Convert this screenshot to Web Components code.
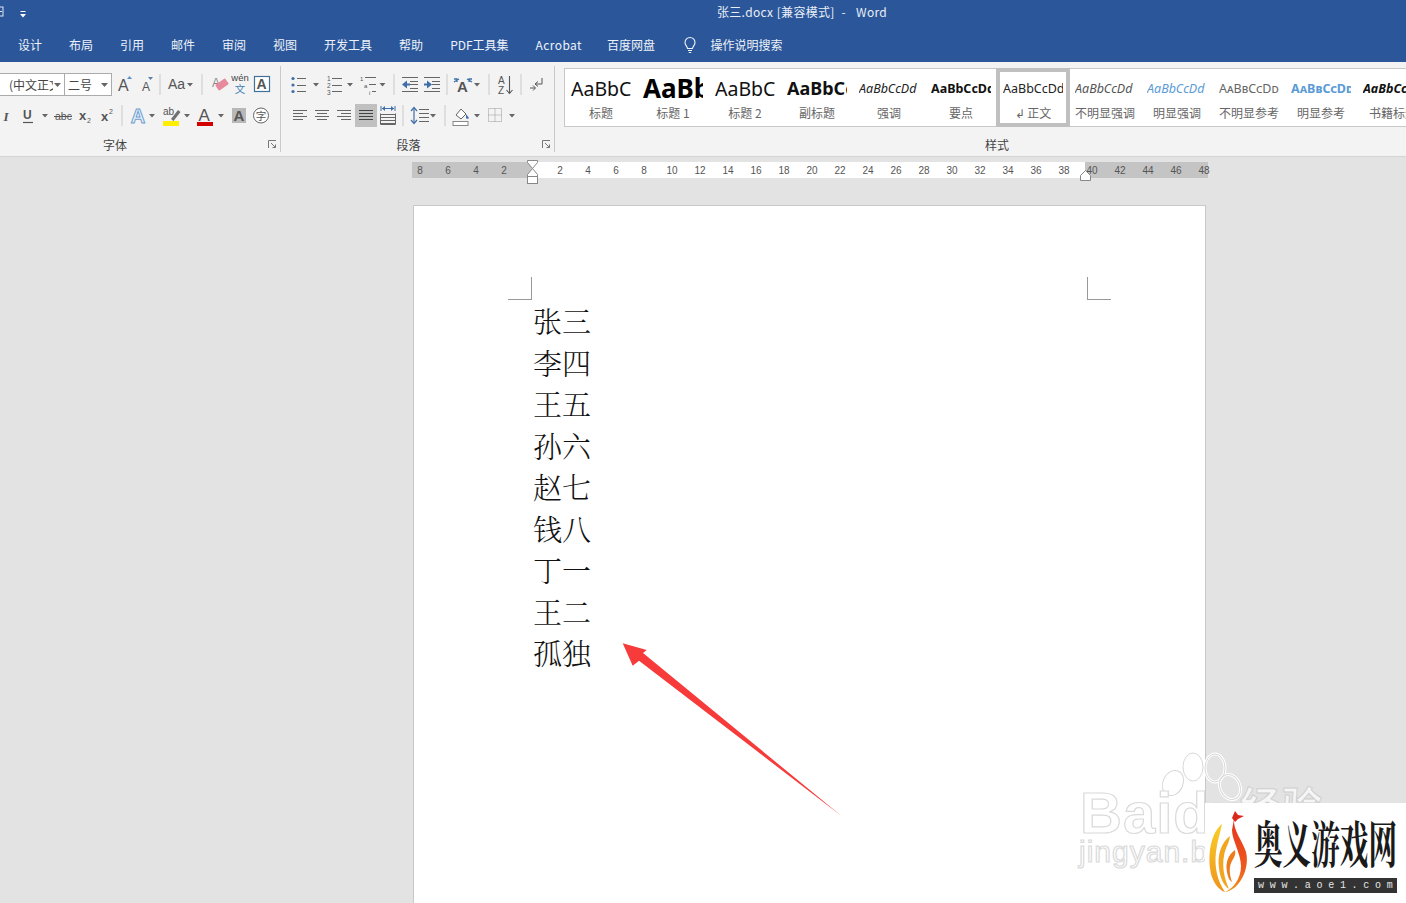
<!DOCTYPE html>
<html lang="zh"><head><meta charset="utf-8"><title>张三.docx - Word</title>
<style>
html,body{margin:0;padding:0;height:100%;overflow:hidden;background:#e3e3e3}
body{font-family:"Noto Sans CJK SC","Liberation Sans",sans-serif;font-size:12px}
</style></head>
<body>
<word-app>
  <word-titlebar title-text="张三.docx [兼容模式]  -   Word"></word-titlebar>
  <word-tabs>
    <word-tab>设计</word-tab><word-tab>布局</word-tab><word-tab>引用</word-tab><word-tab>邮件</word-tab><word-tab>审阅</word-tab><word-tab>视图</word-tab><word-tab>开发工具</word-tab><word-tab>帮助</word-tab><word-tab>PDF工具集</word-tab><word-tab wide>Acrobat</word-tab><word-tab>百度网盘</word-tab><word-tell>操作说明搜索</word-tell>
  </word-tabs>
  <word-ribbon>
    <rb-group label="字体" launcher width="281" shift="50">
      <rb-row slot="r1">
        <rb-combo w="65" arrow="57" pad="9">(中文正文</rb-combo><rb-combo w="47" arrow="39" pad="3" boxed>二号</rb-combo>
        <rb-ico n="grow"></rb-ico><rb-ico n="shrink"></rb-ico><rb-ico n="sep" w="6"></rb-ico><rb-ico n="aa"></rb-ico><rb-ico n="sep" w="6"></rb-ico><rb-ico n="gap" w="2"></rb-ico><rb-ico n="eraser"></rb-ico><rb-ico n="wen"></rb-ico><rb-ico n="abox"></rb-ico>
      </rb-row>
      <rb-row slot="r2">
        <rb-ico n="i"></rb-ico><rb-ico n="gap" w="5"></rb-ico><rb-ico n="u"></rb-ico><rb-ico n="dd"></rb-ico><rb-ico n="gap" w="1"></rb-ico><rb-ico n="abc"></rb-ico><rb-ico n="sub"></rb-ico><rb-ico n="sup"></rb-ico><rb-ico n="sep" w="8"></rb-ico><rb-ico n="gap" w="1"></rb-ico><rb-ico n="aeff"></rb-ico><rb-ico n="dd" w="6"></rb-ico><rb-ico n="gap" w="5"></rb-ico><rb-ico n="hl"></rb-ico><rb-ico n="dd" w="10"></rb-ico><rb-ico n="gap" w="2"></rb-ico><rb-ico n="ared"></rb-ico><rb-ico n="dd" w="10"></rb-ico><rb-ico n="gap" w="2"></rb-ico><rb-ico n="agray"></rb-ico><rb-ico n="zi"></rb-ico>
      </rb-row>
    </rb-group>
    <rb-group label="段落" launcher width="274" shift="18">
      <rb-row slot="r1">
        <rb-ico n="gap" w="10"></rb-ico><rb-ico n="bul"></rb-ico><rb-ico n="dd" w="20"></rb-ico><rb-ico n="gap" w="1"></rb-ico><rb-ico n="num"></rb-ico><rb-ico n="dd" w="16"></rb-ico><rb-ico n="gap" w="2"></rb-ico><rb-ico n="multi"></rb-ico><rb-ico n="dd" w="13"></rb-ico><rb-ico n="gap" w="1"></rb-ico><rb-ico n="sep" w="8"></rb-ico><rb-ico n="gap" w="1"></rb-ico><rb-ico n="outd"></rb-ico><rb-ico n="ind"></rb-ico><rb-ico n="sep" w="8"></rb-ico><rb-ico n="gap" w="2"></rb-ico><rb-ico n="cnlay"></rb-ico><rb-ico n="dd" w="8"></rb-ico><rb-ico n="gap" w="4"></rb-ico><rb-ico n="sep" w="8"></rb-ico><rb-ico n="gap" w="2"></rb-ico><rb-ico n="sort"></rb-ico><rb-ico n="gap" w="3"></rb-ico><rb-ico n="sep" w="6"></rb-ico><rb-ico n="gap" w="1"></rb-ico><rb-ico n="para"></rb-ico>
      </rb-row>
      <rb-row slot="r2">
        <rb-ico n="gap" w="8"></rb-ico><rb-ico n="al"></rb-ico><rb-ico n="ac"></rb-ico><rb-ico n="ar"></rb-ico><rb-ico n="aj"></rb-ico><rb-ico n="ad"></rb-ico><rb-ico n="sep" w="8"></rb-ico><rb-ico n="gap" w="3"></rb-ico><rb-ico n="ls"></rb-ico><rb-ico n="dd" w="6"></rb-ico><rb-ico n="gap" w="6"></rb-ico><rb-ico n="sep" w="6"></rb-ico><rb-ico n="gap" w="2"></rb-ico><rb-ico n="shade"></rb-ico><rb-ico n="dd" w="10"></rb-ico><rb-ico n="gap" w="4"></rb-ico><rb-ico n="bord"></rb-ico><rb-ico n="gap" w="3"></rb-ico><rb-ico n="dd" w="10"></rb-ico>
      </rb-row>
    </rb-group>
    <rb-styles label="样式">
      <style-tile sample="AaBbC" name="标题" v="t"></style-tile>
      <style-tile sample="AaBbC" name="标题 1" v="h1"></style-tile>
      <style-tile sample="AaBbC" name="标题 2" v="t"></style-tile>
      <style-tile sample="AaBbCc" name="副标题" v="sub"></style-tile>
      <style-tile sample="AaBbCcDd" name="强调" v="em"></style-tile>
      <style-tile sample="AaBbCcDd" name="要点" v="strong"></style-tile>
      <style-tile sample="AaBbCcDd" name="↲ 正文" v="normal" selected></style-tile>
      <style-tile sample="AaBbCcDd" name="不明显强调" v="subem"></style-tile>
      <style-tile sample="AaBbCcDd" name="明显强调" v="intem"></style-tile>
      <style-tile sample="AaBbCcDdl" name="不明显参考" v="subref"></style-tile>
      <style-tile sample="AaBbCcDd" name="明显参考" v="intref"></style-tile>
      <style-tile sample="AaBbCcDd" name="书籍标题" v="book"></style-tile>
    </rb-styles>
  </word-ribbon>
  <word-canvas>
    <word-ruler></word-ruler>
    <word-page>
      <doc-line>张三</doc-line><doc-line>李四</doc-line><doc-line>王五</doc-line><doc-line>孙六</doc-line><doc-line>赵七</doc-line><doc-line>钱八</doc-line><doc-line>丁一</doc-line><doc-line>王二</doc-line><doc-line>孤独</doc-line>
    </word-page>
    <baidu-mark></baidu-mark>
    <red-arrow></red-arrow>
    <aoe-logo></aoe-logo>
  </word-canvas>
</word-app>
<script>
const CJK='"Noto Sans CJK SC","Liberation Sans",sans-serif';
const def=(name,html)=>{customElements.define(name,class extends HTMLElement{
  constructor(){super();this.attachShadow({mode:'open'}).innerHTML=typeof html==='function'?'':html;}
  connectedCallback(){if(typeof html==='function')this.shadowRoot.innerHTML=html(this);}
});};
def('word-app',`<style>:host{display:flex;flex-direction:column;width:1406px;height:903px;overflow:hidden;background:#e3e3e3}</style><slot></slot>`);
def('word-titlebar',el=>`<style>
:host{display:flex;height:31px;background:#2b579a;color:#e9eef6;font:12px ${CJK};align-items:center;overflow:hidden;flex:none}
.l{width:606px;flex:none;display:flex;align-items:center;height:100%}
.t{white-space:pre;letter-spacing:.3px;word-spacing:.4px;margin-left:111px;margin-top:-9px;font-size:12px}
svg{display:block}
</style><div class="l"><svg width="32" height="31"><rect x="-5" y="7" width="8" height="9" fill="none" stroke="#dfe7f2"/><path d="M-1 9v5M-3 11.500h5" stroke="#dfe7f2"/><path d="M20.500 11.500h5" stroke="#fff"/><path d="M20 14h6l-3 3.500z" fill="#fff"/></svg></div><div class="t">${el.getAttribute('title-text')}</div>`);
def('word-tabs',`<style>:host{display:flex;height:31px;background:#2b579a;padding-left:4.500px;flex:none;align-items:center;box-sizing:border-box;padding-bottom:3px}</style><slot></slot>`);
def('word-tab',el=>`<style>:host{display:block;padding:0 13.500px;color:#eef2f8;font:12px/20px ${CJK};white-space:nowrap;${el.hasAttribute('wide')?'letter-spacing:.4px;margin-right:-2px;':''}}</style><slot></slot>`);
def('word-tell',`<style>:host{display:flex;align-items:center;margin-left:14px;color:#eef2f8;font:12px/20px ${CJK};white-space:nowrap;gap:12px}</style>
<svg width="16" height="18" viewBox="0 0 16 18" fill="none" stroke="#eef2f8" stroke-width="1.100"><path d="M5.500 12.500c0-2-2.500-3-2.500-6a5 5 0 0 1 10 0c0 3-2.500 4-2.500 6z"/><path d="M6 14.500h4M6.800 16.500h2.400"/></svg><slot></slot>`);
def('word-ribbon',`<style>:host{display:flex;height:95px;flex:none;background:#f3f3f3;border-bottom:1px solid #d4d4d4;box-sizing:border-box;padding-top:4px;overflow:hidden}</style><slot></slot>`);
def('rb-group',el=>`<style>
:host{display:flex;flex-direction:column;flex:none;width:${el.getAttribute('width')}px;box-sizing:border-box;height:86px;border-right:1px solid #c9c9c9;padding-top:7px}
.rows{display:flex;flex-direction:column;gap:8px}
.lab{display:flex;justify-content:center;position:relative;font:12px/18px ${CJK};color:#444;margin-top:9px;padding-right:${el.getAttribute('shift')}px}
svg{position:absolute;right:3px;top:4px}
</style><div class="rows"><slot name="r1"></slot><slot name="r2"></slot></div>
<div class="lab"><span>${el.getAttribute('label')}</span><svg width="9" height="9" fill="none" stroke="#777"><path d="M.5 8V.5H8"/><path d="M3 3l4.500 4.500M7.500 4.500v3h-3"/></svg></div>`);
def('rb-row',`<style>:host{display:flex;height:23px;align-items:center}</style><slot></slot>`);
def('rb-combo',el=>`<style>
:host{display:block;align-self:flex-start;position:relative;box-sizing:border-box;width:${el.getAttribute('w')}px;height:23px;background:#fff;border:1px solid #ababab;border-left:0;font:12px/21px ${CJK};color:#444;overflow:hidden;white-space:nowrap;padding-left:${el.getAttribute('pad')}px}
svg{position:absolute;left:${+el.getAttribute('arrow')-3}px;top:9px}
.c{display:block;width:${+el.getAttribute('arrow')-(+el.getAttribute('pad'))-4}px;overflow:hidden}
</style><span class="c"><slot></slot></span><svg width="7" height="4"><path d="M0 0h7L3.500 4z" fill="#666"/></svg>`);
const T=(x,y,s,t,o='')=>`<text x="${x}" y="${y}" font-size="${s}" font-family="'Liberation Sans',sans-serif" fill="#555" ${o}>${t}</text>`;
const L=(d,c='#666',w=1)=>`<path d="${d}" fill="none" stroke="${c}" stroke-width="${w}"/>`;
const lines=(arr)=>arr.map(([a,b,y])=>`M${a} ${y}.5H${b}`).join('');
const DD=(x,y)=>`<path d="M${x-3} ${y}h6l-3 3.500z" fill="#666"/>`;
const ICONS={
 gap:[2,2,''],
 sep:[6,23,''],
 dd:[12,23,''],
 grow:[22,23,T(6,18,16,'A')+'<path d="M15 6h5l-2.500-3z" fill="#5b8fc7"/>'],
 shrink:[23,23,T(8,18,12,'A')+'<path d="M14 4h5l-2.500 3z" fill="#5b7fa7"/>'],
 aa:[36,23,T(5,16,14,'Aa')+DD(27,10)],
 eraser:[22,23,T(5,14,12,'A','fill-opacity=".7"')+'<rect x="9" y="8" width="12" height="7" rx="1" transform="rotate(-35 15 11.500)" fill="#e88a9d"/>'],
 wen:[22,23,`<text x="11" y="8" text-anchor="middle" font-size="9.500" font-family="'Liberation Sans',sans-serif" fill="#444">wén</text><text x="11" y="20" text-anchor="middle" font-size="10.500" font-family="'Noto Sans CJK SC'" fill="#3f7fb5">文</text>`],
 abox:[22,23,'<rect x="3.500" y="3.500" width="15" height="15" fill="#fff" stroke="#44709c" stroke-width="1.200"/>'+T(5.500,16,14,'A','fill="#44607c" font-weight="bold"')],
 i:[12,23,`<text x="6" y="17" text-anchor="middle" font-size="13" font-style="italic" font-weight="bold" font-family="'Liberation Serif',serif" fill="#555">I</text>`],
 u:[22,23,T(6,15,12,'U','font-weight="bold"')+L('M6 18.500h10','#555',1.200)],
 abc:[22,23,T(3,16,10.500,'abc')+L('M2 12.500h18','#555')],
 sub:[22,23,T(5,16,13,'x','font-weight="bold"')+T(13,19,7,'2')],
 sup:[22,23,T(5,17,13,'x','font-weight="bold"')+T(13,10,7,'2')],
 aeff:[22,23,`<text x="11" y="19" text-anchor="middle" font-size="20" font-weight="bold" font-family="'Liberation Sans',sans-serif" fill="#eaf2fa" stroke="#6f9fd0" stroke-width="1">A</text>`],
 hl:[22,23,T(3,11,10,'ab')+'<path d="M11 15l7-9 2.500 2-7 9z" fill="#707070"/><rect x="3" y="17" width="16" height="5" fill="#ffee00"/>'],
 ared:[22,23,T(4.500,17,17,'A')+'<rect x="3" y="18" width="16" height="4" fill="#d40000"/>'],
 agray:[22,23,'<rect x="4" y="4" width="14" height="15" fill="#b8b8b8"/>'+T(5.500,17,15,'A','fill="#4a4a4a" font-weight="bold"')],
 zi:[22,23,`<circle cx="11" cy="11.500" r="7.500" fill="#fff" stroke="#666"/><text x="11" y="15.500" text-anchor="middle" font-size="10.500" font-family="'Noto Sans CJK SC'" fill="#555">字</text>`],
 bul:[15,23,'<g fill="#3e6fa8"><circle cx="2" cy="5.500" r="1.600"/><circle cx="2" cy="12" r="1.600"/><circle cx="2" cy="18.500" r="1.600"/></g>'+L(lines([[6,15,5],[6,15,12],[6,15,18]]))],
 num:[15,23,T(0,8,6.500,'1','fill="#3e6fa8"')+T(0,15,6.500,'2','fill="#3e6fa8"')+T(0,22,6.500,'3','fill="#3e6fa8"')+L(lines([[5,15,5],[5,15,12],[5,15,18]]))],
 multi:[16,23,T(0,8,6,'1','fill="#3e6fa8"')+T(4,15,6,'a','fill="#3e6fa8"')+T(9,22,6,'i','fill="#3e6fa8"')+L(lines([[5,16,4],[9,16,11],[12,16,18]]))],
 outd:[22,23,'<path d="M3 11.500l5-4v8z" fill="#3e6fa8"/><path d="M6 10.500h5v2H6z" fill="#3e6fa8"/>'+L(lines([[3,19,4],[11,19,8],[11,19,11],[11,19,15],[3,19,18]]))],
 ind:[22,23,'<path d="M11 11.500l-5-4v8z" fill="#3e6fa8"/><path d="M3 10.500h5v2H3z" fill="#3e6fa8"/>'+L(lines([[3,19,4],[11,19,8],[11,19,11],[11,19,15],[3,19,18]]))],
 cnlay:[20,23,T(4,19,15,'A','font-weight="bold" fill="#555"')+L('M1 9l5-3M1 6h3v3M19 9l-5-3M19 6h-3v3','#3e6fa8',1.300)],
 sort:[20,23,T(3,11,10,'A','fill="#5a7fb5"')+T(3,21,10,'Z','fill="#8a62a8"')+L('M14.500 3v17M11.500 17l3 3.500 3-3.500','#555',1.100)],
 para:[22,23,L('M17 5v6h-6M13 8.500l-3 2.500 3 2.500','#555')+L('M5 15h5M8 12.500l2.500 2.500L8 17.500','#555')],
 al:[22,23,L(lines([[4,18,6],[4,14,9],[4,18,12],[4,14,15]]))],
 ac:[22,23,L(lines([[4,18,6],[6,16,9],[4,18,12],[6,16,15]]))],
 ar:[22,23,L(lines([[4,18,6],[8,18,9],[4,18,12],[8,18,15]]))],
 aj:[22,23,'<rect width="22" height="23" fill="#c0c0c0"/>'+L(lines([[4,18,6],[4,18,9],[4,18,12],[4,18,15]]),'#444')],
 ad:[22,23,L(lines([[4,18,10],[4,18,13],[4,18,16],[4,18,19]]))+L('M4 2v5M18 2v5M5 4.500h12','#3e6fa8')+'<path d="M5 4.500l3-2.500v5zM17 4.500l-3-2.500v5z" fill="#3e6fa8"/>'+L('M3.500 9.500v11h15v-11','#666')],
 ls:[20,23,L('M4 4v15','#3e6fa8',1.200)+L('M1 7l3-3.500L7 7M1 16l3 3.500L7 16','#3e6fa8',1.200)+L(lines([[9,19,5],[9,19,9],[9,19,13],[9,19,17]]))],
 shade:[22,23,'<path d="M6 11l5-6 5 5-5 5z" fill="#fff" stroke="#666"/><path d="M16 10l3 4a2 2 0 0 1-3 0z" fill="#3e6fa8"/><rect x="3" y="17.500" width="15" height="4" fill="#fff" stroke="#888"/>'],
 bord:[18,23,`<g fill="none" stroke="#999" stroke-dasharray="1 1"><rect x="2.500" y="4.500" width="13" height="13"/><path d="M9 4.500v13M2.500 11h13"/></g>`],
};
customElements.define('rb-ico',class extends HTMLElement{
 constructor(){super();this.attachShadow({mode:'open'});}
 connectedCallback(){
  const n=this.getAttribute('n');const[iw,ih,s]=ICONS[n];const w=+this.getAttribute('w')||iw;
  let body=s;
  if(n==='sep')body=`<path d="M${w/2} 1v21" stroke="#c9c9c9"/>`;
  if(n==='dd')body=DD(w/2,10);
  this.shadowRoot.innerHTML=`<style>:host{display:block;flex:none;width:${w}px;height:23px}svg{display:block;overflow:visible}</style><svg width="${w}" height="23" viewBox="0 0 ${w} 23">${body}</svg>`;
 }
});
def('rb-styles',el=>`<style>
:host{display:flex;flex-direction:column;flex:none;width:884px;box-sizing:border-box;height:86px}
.g{display:flex;margin:2px 0 0 9px;height:59px;background:#fff;border:1px solid #c8c8c8;box-sizing:border-box;width:875px}
.lab{text-align:center;font:12px/18px ${CJK};color:#444;margin-top:9px}
</style><div class="g"><slot></slot></div><div class="lab">${el.getAttribute('label')}</div>`);
const TV={t:'font:19.500px "Noto Sans";color:#111',h1:'font:bold 26px "Noto Sans";color:#000',sub:'font:bold 18px "Noto Sans";color:#111',em:'font:italic 12.500px "Noto Sans";color:#222',strong:'font:bold 12.500px "Noto Sans";color:#111',normal:'font:12.500px "Noto Sans";color:#222',subem:'font:italic 12.500px "Noto Sans";color:#555',intem:'font:italic 12.500px "Noto Sans";color:#5b9bd5',subref:'font:12.500px "Noto Sans";color:#666;font-variant:small-caps',intref:'font:bold 12.500px "Noto Sans";color:#5b9bd5;font-variant:small-caps',book:'font:italic bold 12.500px "Noto Sans";color:#111'};
def('style-tile',el=>`<style>
:host{display:flex;flex-direction:column;flex:none;width:72px;height:57px;box-sizing:border-box;align-items:center;padding:6px 6px 0;${el.hasAttribute('selected')?'outline:4px solid #c0c0c0;outline-offset:-3px;':''}overflow:hidden}
.s{height:27px;white-space:nowrap;display:flex;align-items:center;justify-content:flex-start;width:60px;overflow:hidden;${TV[el.getAttribute('v')]};line-height:27px;flex:none}
.s span{flex:none}
.n{font:12px/18px ${CJK};color:#666;white-space:nowrap;margin-top:2px}
</style><div class="s"><span>${el.getAttribute('sample')}</span></div><div class="n">${el.getAttribute('name')}</div>`);
const nums=[8,6,4,2,'',2,4,6,8,10,12,14,16,18,20,22,24,26,28,30,32,34,36,38,40,42,44,46,48];
def('word-ruler',`<style>
:host{display:flex;position:relative;flex:none;width:796px;height:16px;margin:5px 0 0 412px;background:linear-gradient(90deg,#c4c4c4 0 120px,#fff 120px 673px,#c4c4c4 673px);font:10px/17px "Liberation Sans",sans-serif;color:#555}
.n{display:flex;margin-left:-6px}
.n span{display:block;width:28px;text-align:center;flex:none}
svg{position:absolute;overflow:visible}
</style><div class="n">${nums.map(n=>`<span>${n}</span>`).join('')}</div>
<svg style="left:115px;top:-2px" width="12" height="27" fill="#fff" stroke="#888"><path d="M.5.5h10v2l-5 6-5-6z"/><path d="M5.500 8.500l5 6v2H.5v-2z"/><rect x=".5" y="16.500" width="10" height="7"/></svg>
<svg style="left:668px;top:8px" width="12" height="12" fill="#fff" stroke="#888"><path d="M5.500.5l5 5v5H.5v-5z"/></svg>`);
def('word-canvas',`<style>:host{display:flex;flex-direction:column;flex:1;position:relative;overflow:hidden;background:#e3e3e3}</style><slot></slot>`);
def('word-page',`<style>
:host{display:block;flex:none;width:793px;height:720px;margin:27px 0 0 413px;background:#fff;border:1px solid #c8c8c8;box-sizing:border-box;padding-top:71px}
.m{display:flex;justify-content:space-between;padding:0 94px;height:23px}
.c{width:24px;height:23px;box-sizing:border-box;border-bottom:1px solid #999}
.a{border-right:1px solid #999}.b{border-left:1px solid #999}
.t{padding-left:119px}
</style><div class="m"><div class="c a"></div><div class="c b"></div></div><div class="t"><slot></slot></div>`);
def('doc-line',`<style>:host{display:block;font:29px/41.500px "Noto Serif CJK SC","Source Han Serif SC","Noto Sans CJK SC",serif;font-weight:300;color:#111;white-space:nowrap}</style><slot></slot>`);
def('red-arrow',`<style>:host{position:absolute;left:610px;top:480px;display:block}svg{display:block}</style>
<svg width="240" height="190" viewBox="610 637 240 190"><path d="M622.700 643.300L646.700 650 643 653 841.500 816 639 660.700 632.700 665.700z" fill="#f73a3a"/></svg>`);
def('baidu-mark',`<style>
:host{position:absolute;left:1076px;top:593px;width:330px;height:160px;display:block;overflow:hidden;pointer-events:none}
.b{position:absolute;left:4px;top:32px;font:bold 58px/62px "Liberation Sans",sans-serif;color:#fff;-webkit-text-stroke:1.200px #dadada;letter-spacing:1px;white-space:nowrap}
.j{position:absolute;left:3px;top:82px;font:30px/40px "Liberation Sans",sans-serif;color:#fff;-webkit-text-stroke:1.200px #dadada;white-space:nowrap;letter-spacing:1px}
.c{position:absolute;left:164px;top:32px;font:bold 40px/44px ${CJK};color:#f6f6f6;-webkit-text-stroke:1px #cfcfcf;letter-spacing:2px;white-space:nowrap}
svg{position:absolute;left:0;top:0}
</style>
<svg width="200" height="80" fill="none"><g stroke="#fff" stroke-width="3"><ellipse cx="117" cy="17" rx="10" ry="14"/><ellipse cx="139" cy="18" rx="10" ry="14"/><ellipse cx="154" cy="37" rx="10" ry="13" transform="rotate(-25 154 37)"/><ellipse cx="97" cy="33" rx="10" ry="13" transform="rotate(25 97 33)"/></g><g stroke="#d8d8d8"><ellipse cx="117" cy="17" rx="10" ry="14"/><ellipse cx="139" cy="18" rx="10" ry="14"/><ellipse cx="154" cy="37" rx="10" ry="13" transform="rotate(-25 154 37)"/><ellipse cx="97" cy="33" rx="10" ry="13" transform="rotate(25 97 33)"/></g></svg>
<div class="b">Baidu</div><div class="c">经验</div><div class="j">jingyan.baidu</div>`);
def('aoe-logo',`<style>
:host{position:absolute;left:1205px;bottom:0;width:201px;height:100px;background:#fff;display:flex;align-items:flex-start;box-sizing:border-box;padding:7px 0 0 3px;gap:6px}
.r{display:flex;flex-direction:column;padding-top:7px;width:143px}
.t{height:50px;overflow:visible}
.t span{display:block;font:bold 28.600px/28.600px "Noto Serif CJK SC","Noto Sans CJK SC",serif;color:#1a1a1a;white-space:nowrap;transform:scaleY(1.750);transform-origin:0 0}
.u{margin-top:11px;height:15px;background:#333;color:#e6e6e6;font:10px/15px "Liberation Mono",monospace;letter-spacing:5.700px;padding-left:4px;white-space:nowrap;overflow:hidden}
svg{display:block;flex:none}
</style><svg width="40" height="84" viewBox="0 0 40 84"><defs><linearGradient id="h" x1="0" y1="0" x2="0" y2="1"><stop offset="0" stop-color="#e5341c"/><stop offset=".7" stop-color="#ee5c1c"/><stop offset="1" stop-color="#f29a1e"/></linearGradient><linearGradient id="g" x1="0" y1="0" x2="0" y2="1"><stop offset="0" stop-color="#f8cf2a"/><stop offset="1" stop-color="#f0921c"/></linearGradient></defs>
<path d="M24 8L27 1l3 4 6 1-6 3-3 3z" fill="#d9281c"/>
<path d="M26 9C25 20 34 30 38 42c4 16-6 38-21 40 9-4 16-14 16-26 0-12-9-26-9-36z" fill="url(#h)"/>
<path d="M14 14C4 22 0 40 2 58c1 12 8 22 15 24-7-10-11-24-9-40 1-10 4-18 6-28z" fill="url(#g)"/>
<path d="M22 26c-8 6-13 18-11 32 1 10 5 18 10 21-5-11-7-23-5-33 1-8 5-12 6-20z" fill="#f2a51e"/>
<path d="M27 40c-6 4-10 12-8 22 1 6 3 9 5 10-3-8-3-16 0-21 2-3 4-7 3-11z" fill="#ee7b1a"/>
</svg>
<div class="r"><div class="t"><span>奥义游戏网</span></div><div class="u">www.aoe1.com</div></div>`);
</script>
</body></html>
